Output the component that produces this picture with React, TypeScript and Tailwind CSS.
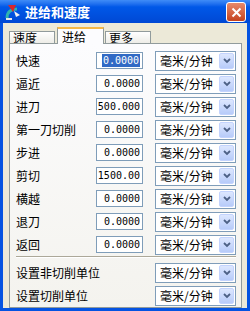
import React from 'react';

const font = { fontFamily: '"Noto Sans CJK SC", "Liberation Sans", sans-serif' };

const rows = [
  { label: '快速', value: '0.0000', active: true },
  { label: '逼近', value: '0.0000' },
  { label: '进刀', value: '500.000' },
  { label: '第一刀切削', value: '0.0000' },
  { label: '步进', value: '0.0000' },
  { label: '剪切', value: '1500.00' },
  { label: '横越', value: '0.0000' },
  { label: '退刀', value: '0.0000' },
  { label: '返回', value: '0.0000' },
];

const UnitSelect = () => (
  <div className="flex h-[20px] w-[81px] items-center border border-[#7f9db9] bg-white">
    <span className="flex-1 pl-[4px] text-[12px] leading-none text-black">毫米/分钟</span>
    <div className="mr-px flex h-[16px] w-[15px] items-center justify-center rounded-[2px] border border-[#c3d3fd] bg-gradient-to-b from-[#dde7fe] to-[#b7cbf9]">
      <svg width="8" height="6" viewBox="0 0 8 6">
        <path d="M1 1 L4 4 L7 1" stroke="#4d6185" strokeWidth="1.8" fill="none" />
      </svg>
    </div>
  </div>
);

const App = () => {
  return (
    <div className="flex h-[311px] w-[250px] flex-col bg-[#0553e1]" style={font}>
      {/* Title bar */}
      <div className="relative flex h-[26px] items-center bg-gradient-to-b from-[#3f8cf7] via-[#0058e8] via-30% to-[#0048d4] pl-[4px]">
        <svg width="18" height="18" viewBox="0 0 18 18">
          <path d="M3 15 C3 9 7 6 13 6" stroke="#2fb3b0" strokeWidth="3" fill="none" />
          <path d="M2 16 L8 16" stroke="#e8e8e8" strokeWidth="2" />
          <path d="M4 2 L12 2 L9 9 Z" fill="#d9262c" />
          <path d="M10 8 L16 12 L12 14 Z" fill="#f2f2f2" />
        </svg>
        <span className="ml-[3px] text-[13px] font-bold text-white">进给和速度</span>
        <div className="absolute right-[4px] top-[2px] flex h-[20px] w-[20px] items-center justify-center rounded-[3px] border border-white bg-gradient-to-b from-[#e7896a] to-[#c4411b]">
          <svg width="11" height="11" viewBox="0 0 11 11">
            <path d="M1.5 1.5 L9.5 9.5 M9.5 1.5 L1.5 9.5" stroke="white" strokeWidth="2" />
          </svg>
        </div>
      </div>

      {/* Client area */}
      <div className="mx-[3px] mb-[3px] flex flex-1 flex-col bg-[#ece9d8] pt-[4px]">
        {/* Tabs */}
        <div className="flex items-end pl-[6px] text-[12px] leading-none text-black">
          <div className="flex h-[13px] w-[46px] items-center border border-b-0 border-[#919b9c] bg-gradient-to-b from-white to-[#ecebe5] pl-[3px]">速度</div>
          <div className="relative z-10 ml-[2px] flex h-[17px] w-[47px] items-center border-x border-[#919b9c] border-t-[2px] border-t-[#f5b847] bg-[#fcfcfe] pl-[4px]">进给</div>
          <div className="ml-[1px] flex h-[13px] w-[46px] items-center border border-b-0 border-[#919b9c] bg-gradient-to-b from-white to-[#ecebe5] pl-[3px]">更多</div>
        </div>

        {/* Panel */}
        <div className="-mt-px ml-[6px] mr-[5px] flex flex-1 flex-col overflow-hidden border border-[#919b9c] bg-gradient-to-b from-[#fcfcfe] to-[#f4f3ee] pl-[6px] pt-[5px]">
          {rows.map((r) => (
            <div key={r.label} className="flex h-[23px] items-center">
              <span className="w-[80px] text-[12px] leading-none text-black">{r.label}</span>
              <div className="flex h-[17px] w-[47px] items-center justify-end border border-[#7f9db9] bg-white pr-[2px]">
                <span
                  className={
                    r.active
                      ? 'bg-[#316ac5] px-px text-[10px] leading-[13px] text-white'
                      : 'text-[10px] leading-[13px] text-black'
                  }
                  style={{ fontFamily: '"DejaVu Sans Mono", monospace' }}
                >
                  {r.value}
                </span>
              </div>
              <div className="ml-[12px]">
                <UnitSelect />
              </div>
            </div>
          ))}

          <div className="mr-[5px] h-px bg-[#aca899]" />
          <div className="mr-[5px] h-px bg-white" />

          <div className="pt-[3px]">
            <div className="flex h-[23px] items-center">
              <span className="w-[139px] text-[12px] leading-none text-black">设置非切削单位</span>
              <UnitSelect />
            </div>
            <div className="flex h-[23px] items-center">
              <span className="w-[139px] text-[12px] leading-none text-black">设置切削单位</span>
              <UnitSelect />
            </div>
          </div>
        </div>
      </div>
    </div>
  );
};

export default App;
